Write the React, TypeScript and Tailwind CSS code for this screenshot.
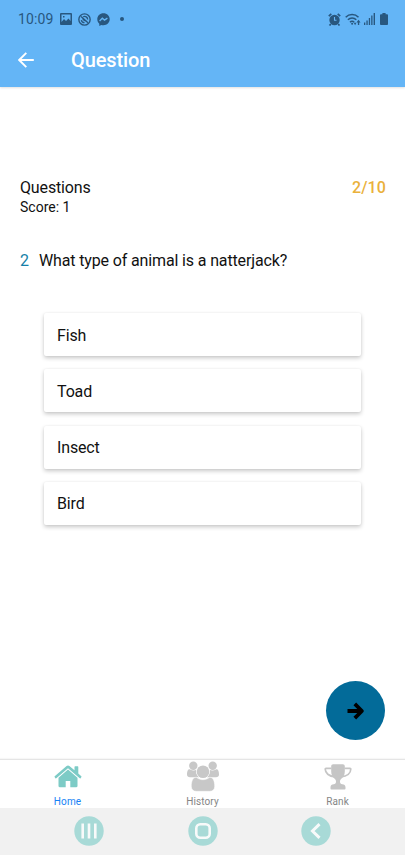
import React from "react";

const answers = ["Fish", "Toad", "Insect", "Bird"];

function StatusBar() {
  return (
    <div className="flex h-[38px] items-center pl-[18px] pr-[17px] text-[#28577f]">
      <span className="w-[36px] whitespace-nowrap text-[14px] leading-[16px] tracking-[0.1px]">10:09</span>
      <svg className="ml-[6px] shrink-0" width="12" height="12" viewBox="0 0 12 12">
        <path fill="currentColor" fillRule="evenodd" d="M1 0h10a1 1 0 0 1 1 1v10a1 1 0 0 1-1 1H1a1 1 0 0 1-1-1V1a1 1 0 0 1 1-1ZM1.500 1.500v7.500L4 6l2 2 2.500-2.500L10.500 8V1.500ZM3 3h1.500v1.500H3Z" />
      </svg>
      <svg className="ml-[6px] shrink-0" width="13" height="13" viewBox="0 0 14 14" fill="none" stroke="currentColor">
        <circle cx="7" cy="7" r="6.100" strokeWidth="1.500" />
        <path d="M3.300 3.800 10.700 10.500M3.600 7.600c.3 1.700 1.600 2.800 3.400 2.800M5.600 4C7.900 2.900 10.400 4.500 10.400 7" strokeWidth="1.400" />
        <path d="M5 5 9.500 9H7.300L5 7.500Z" fill="currentColor" stroke="none" />
      </svg>
      <svg className="ml-[6px] shrink-0" width="13" height="13" viewBox="0 0 13 13">
        <path fill="currentColor" d="M6.500.3C2.900.3.300 2.900.300 6.300c0 1.800.7 3.300 2 4.400V13l2-1.100c.7.200 1.400.3 2.200.3 3.600 0 6.200-2.600 6.200-5.900S10.100.3 6.500.3Z" />
        <path d="m2.600 8 2.700-2.800 2.200 1.900 2.900-2" fill="none" stroke="#64b5f6" strokeWidth="1.300" />
      </svg>
      <span className="ml-[10px] size-[4px] rounded-full bg-[#28577f]" />
      <svg className="ml-auto shrink-0" width="13" height="13" viewBox="0 0 13 13">
        <path d="m.8 3.200 2.500-2.300M12.200 3.200 9.700.9M2.800 11l-1.300 1.500M10.200 11l1.300 1.500" stroke="currentColor" strokeWidth="1.700" />
        <circle cx="6.500" cy="7" r="5.200" fill="currentColor" />
        <path d="M6.500 4v3.200h2" stroke="#64b5f6" strokeWidth="1.100" fill="none" />
      </svg>
      <svg className="ml-[4px] shrink-0" width="16" height="13" viewBox="0 0 16 13" fill="none" stroke="currentColor" strokeWidth="1.500">
        <path d="M.700 4.200C4.200.6 10 .6 13.500 4.200M2.900 6.800c2.400-2.400 6-2.400 8.400 0M5 9.200c1.200-1.200 3-1.200 4.200 0" />
        <circle cx="7.100" cy="10.800" r="1" fill="currentColor" stroke="none" />
        <path d="m8.800 9.800 1.300 2.400 1.300-2.400ZM11.500 9.500 13.500 6.800l2 2.700h-1.300V12h-1.300V9.500Z" fill="currentColor" stroke="none" />
      </svg>
      <svg className="ml-[3px] shrink-0" width="11" height="12" viewBox="0 0 11 12" fill="currentColor">
        <path d="M0 9.500h1.300V12H0ZM2.400 7.500h1.300V12H2.400ZM4.800 5h1.300v7H4.800ZM7.200 2.500h1.300V12H7.200ZM9.600 0H11v12H9.600Z" />
      </svg>
      <svg className="ml-[5px] shrink-0" width="8" height="12" viewBox="0 0 9 12" preserveAspectRatio="none">
        <path fill="currentColor" d="M2.700 0h3.600v1.200H8a1 1 0 0 1 1 1V11a1 1 0 0 1-1 1H1a1 1 0 0 1-1-1V2.200a1 1 0 0 1 1-1h1.700Z" />
      </svg>
    </div>
  );
}

function HomeIcon() {
  return (
    <svg width="28" height="23" viewBox="0 0 28 23" fill="#7dcbc6">
      <path d="M14 .5c.6 0 1 .2 1.400.5L20.500 5.200V1.900c0-.4.300-.6.600-.6h2.600c.4 0 .6.300.6.600v6.500l3 2.800c.3.300.3.600.1.900l-.8 1.100c-.2.300-.6.300-.9.100L14 3.200 2.300 13.300c-.3.200-.7.200-.9-.1l-.8-1.100c-.2-.3-.2-.6.1-.9L12.600 1c.4-.3.800-.5 1.400-.5Z" />
      <path d="m14 4.600 9.500 8.200v8.300c0 .7-.5 1.100-1.100 1.100h-6.100v-6.300h-4.600v6.300H5.600c-.6 0-1.100-.4-1.100-1.100v-8.300Z" />
    </svg>
  );
}

function PeopleIcon() {
  return (
    <svg width="32" height="31" viewBox="0 0 32 31" fill="#c8c8c8">
      <circle cx="6.300" cy="4.700" r="4.200" />
      <circle cx="25.700" cy="4.700" r="4.200" />
      <path d="M3.200 8.500c2 1.200 4.300 1.200 6.300.3-.4 3.300.6 5.600 2.600 7.400H3C1.200 16.200 0 15.100 0 13.400c0-2.600.8-5.800 3.200-4.900ZM28.800 8.500c-2 1.200-4.300 1.200-6.300.3.400 3.300-.6 5.600-2.600 7.400H29c1.800 0 3-1.100 3-2.800 0-2.600-.8-5.800-3.200-4.900Z" />
      <circle cx="16" cy="10.700" r="6.900" fill="#fff" />
      <path d="M9.300 16.300c4 3.200 9.400 3.200 13.400 0 3.700-.2 5 4.500 5 9 0 3.200-2 5-5 5H9.300c-3 0-5-1.800-5-5 0-4.500 1.300-9.200 5-9Z" stroke="#fff" strokeWidth=".5" />
      <circle cx="16" cy="10.700" r="6.300" />
    </svg>
  );
}

function TrophyIcon() {
  return (
    <svg width="28" height="26" viewBox="0 0 28 26">
      <path d="M7.500 4.300H2c-.5 0-.8.300-.8.800C1.200 9 4.800 12.300 11 12.800M20.500 4.300H26c.5 0 .8.300.8.800 0 4-3.600 7.200-9.800 7.700" fill="none" stroke="#c5c5c5" strokeWidth="1.700" />
      <path fill="#c5c5c5" d="M9.200.2h9.600c1.200 0 2 .9 2 2v5.300c0 3.400-1.400 5.400-3.200 7-1.200 1-1.600 1.900-1.600 3 0 1.800.8 2.700 2.300 2.700 1.900 0 3.200 1.300 3.200 3v1.500c0 .5-.3.800-.8.800H7.300c-.5 0-.8-.3-.8-.8v-1.500c0-1.700 1.300-3 3.200-3 1.500 0 2.300-.9 2.300-2.700 0-1.100-.4-2-1.600-3-1.800-1.600-3.200-3.600-3.200-7V2.200c0-1.100.8-2 2-2Z" />
    </svg>
  );
}

function Tab({ label, active, children }: { label: string; active?: boolean; children: React.ReactNode }) {
  return (
    <div className="flex flex-1 flex-col items-center">
      <div className="flex h-[33px] items-center justify-center">{children}</div>
      <span className={`mt-[3px] text-[10px] leading-[12px] tracking-[0.1px] ${active ? "text-[#1682f5]" : "text-[#858585]"}`}>{label}</span>
    </div>
  );
}

export default function App() {
  return (
    <div className="flex h-[855px] w-[405px] flex-col overflow-hidden bg-white font-['Roboto',sans-serif] text-[#111]">
      <header className="h-[87px] shrink-0 bg-[#64b5f6] shadow-[0_1px_2px_rgba(0,0,0,0.12)]">
        <StatusBar />
        <div className="flex h-[44px] items-center pl-[18px] text-white">
          <svg width="16" height="16" viewBox="0 0 16 16" fill="none" stroke="currentColor" strokeWidth="1.900">
            <path d="M15.800 8H1.500M8.300.9 1.200 8l7.100 7.100" />
          </svg>
          <h1 className="ml-[37px] text-[20px] font-medium leading-[24px] tracking-[-0.1px]">Question</h1>
        </div>
      </header>

      <main className="flex flex-1 flex-col px-[20px] pt-[91px]">
        <div className="flex items-center justify-between text-[16px] leading-[20px]">
          <span className="tracking-[-0.14px]">Questions</span>
          <span className="-mr-[1px] font-medium tracking-[0.1px] text-[#eab13b]">2/10</span>
        </div>
        <p className="text-[14px] leading-[18px]">Score: 1</p>
        <div className="mt-[35px] flex text-[16px] leading-[20px] tracking-[-0.14px]">
          <span className="w-[19px] text-[#167fa8]">2</span>
          <p className="whitespace-nowrap">What type of animal is a natterjack?</p>
        </div>
        <div className="mt-[42px] flex flex-col gap-[13.300px] pl-[23.500px] pr-[24px]">
          {answers.map((answer) => (
            <button key={answer} className="flex h-[43px] items-center rounded-[2px] bg-white pl-[13.500px] pt-[2px] text-left text-[16px] leading-[20px] tracking-[-0.14px] shadow-[0_2px_4px_rgba(0,0,0,0.22),0_0_2px_rgba(0,0,0,0.06)]">
              {answer}
            </button>
          ))}
        </div>
        <button aria-label="Next question" className="mb-[19px] mt-auto flex size-[59px] items-center justify-center self-end rounded-full bg-[#036b99]">
          <svg width="18" height="18" viewBox="0 0 18 18" fill="none" stroke="#000" strokeWidth="3.800">
            <path d="M.5 9H15M7.800 1.900 14.900 9l-7.100 7.100" strokeLinejoin="round" />
          </svg>
        </button>
      </main>

      <nav className="flex h-[49px] shrink-0 border-t border-[#e5e5e5] bg-white shadow-[0_-1px_1px_rgba(0,0,0,0.03)]">
        <Tab label="Home" active><HomeIcon /></Tab>
        <Tab label="History"><PeopleIcon /></Tab>
        <Tab label="Rank"><TrophyIcon /></Tab>
      </nav>

      <div className="flex h-[47px] shrink-0 justify-between bg-[#f1f1f1] pl-[74px] pr-[74px] pt-[8px]">
        <svg width="30" height="30" viewBox="0 0 30 30">
          <circle cx="15" cy="15" r="14.700" fill="#a8dad7" />
          <path d="M8.700 7.500v15M15 7.500v15M21.300 7.500v15" stroke="#f8fafa" strokeWidth="2.600" />
        </svg>
        <svg width="30" height="30" viewBox="0 0 30 30">
          <circle cx="15" cy="15" r="14.700" fill="#a8dad7" />
          <rect x="8.300" y="8.300" width="13.400" height="13.400" rx="4" fill="none" stroke="#f8fafa" strokeWidth="2.600" />
        </svg>
        <svg width="30" height="30" viewBox="0 0 30 30">
          <circle cx="15" cy="15" r="14.700" fill="#a8dad7" />
          <path d="m18.500 8.200-7 6.800 7 6.800" fill="none" stroke="#f8fafa" strokeWidth="3" />
        </svg>
      </div>
    </div>
  );
}
